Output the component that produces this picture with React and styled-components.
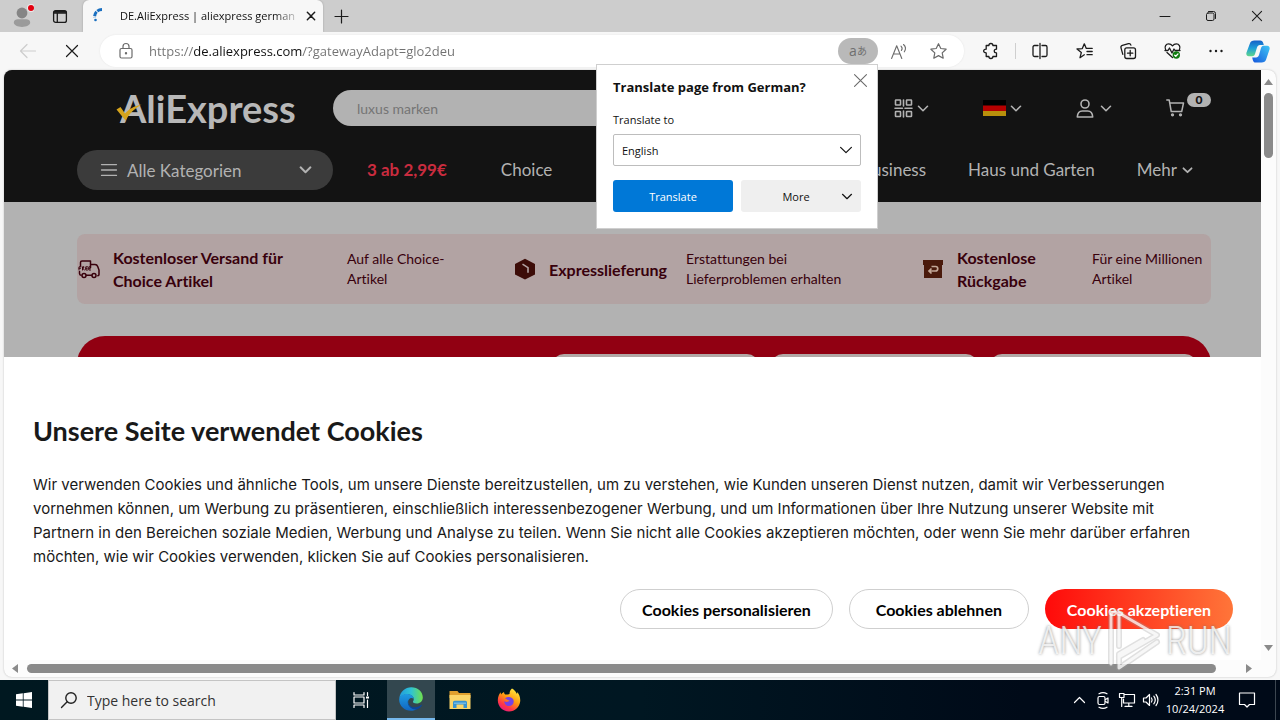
import React, { useState } from "react";
import styled, { createGlobalStyle } from "styled-components";

const GlobalStyle = createGlobalStyle`
    * {
        box-sizing: border-box;
    }
    body {
        margin: 0;
        font-family: "Open Sans", "Noto Sans", sans-serif;
    }
    button, input, select {
        font-family: inherit;
        font-variant-ligatures: none;
        margin: 0;
    }
    button {
        border: 0;
        padding: 0;
        background: none;
        color: inherit;
        cursor: pointer;
    }
    a {
        color: inherit;
        text-decoration: none;
    }
`;

const shopFont = `Lato, "Noto Sans", sans-serif`;

const Desktop = styled.div`
    display: flex;
    flex-direction: column;
    height: 100vh;
    background: #f7f7f7;
    overflow: hidden;
`;

const Glyph = styled.svg`
    display: block;
    flex: none;
    fill: none;
    stroke: currentColor;
    stroke-width: ${(p) => p.$weight || 1};
    stroke-linecap: round;
    stroke-linejoin: round;
    overflow: visible;
`;

/* ---------- tab strip ---------- */

const TabStrip = styled.div`
    display: flex;
    flex: none;
    height: 32px;
    background: #cdcdcd;
    color: #1b1b1b;
`;

const StripButton = styled.button`
    display: flex;
    align-items: center;
    justify-content: center;
    width: ${(p) => p.$width}px;
    height: 32px;
`;

const Tab = styled.div`
    display: flex;
    align-items: center;
    gap: 12px;
    width: 240px;
    margin-left: 7px;
    padding: 0 12px 0 9px;
    background: #f7f7f7;
    border-radius: 6px 6px 0 0;
    box-shadow: 0 0 2px #9a9a9a;
    clip-path: inset(0 -3px 0 -3px);
`;

const TabTitle = styled.span`
    flex: 1;
    font-size: 11px;
    line-height: 16px;
    white-space: nowrap;
    color: #111;
    mask-image: linear-gradient(90deg, #000 88%, transparent 104%);
`;

const WindowButtons = styled.div`
    display: flex;
    margin-left: auto;
`;

/* ---------- toolbar ---------- */

const Toolbar = styled.div`
    display: flex;
    align-items: center;
    flex: none;
    height: 38px;
    padding: 0 3px 0 6px;
    background: #f7f7f7;
    color: #1b1b1b;
`;

const ToolButton = styled.button`
    display: flex;
    align-items: center;
    justify-content: center;
    width: ${(p) => p.$width || 44}px;
    height: 30px;
    color: ${(p) => p.$color || "inherit"};
`;

const Divider = styled.span`
    width: 1px;
    height: 16px;
    margin: 0 2px;
    background: #cfcfcf;
`;

const AddressBar = styled.div`
    display: flex;
    align-items: center;
    flex: 1;
    height: 32px;
    margin: 0 5px 0 6px;
    padding: 0 6px 0 19px;
    border-radius: 16px;
    background: #fff;
    box-shadow: 0 0 2px #e4e4e4;
    color: #6b6b6b;
`;

const UrlInput = styled.input`
    flex: 1;
    min-width: 0;
    height: 24px;
    margin-left: 16px;
    padding: 0;
    border: 0;
    outline: 0;
    font-size: 13px;
    color: transparent;
    background: linear-gradient(90deg, #717171 45px, #111 45px, #111 153px, #717171 153px);
    background-clip: text;
    -webkit-background-clip: text;
`;

const TranslateAnchor = styled.div`
    position: relative;
    margin-right: 2px;
`;

const TranslateToggle = styled.button`
    display: flex;
    align-items: center;
    justify-content: center;
    width: 40px;
    height: 26px;
    border-radius: 13px;
    background: #b9b9b9;
    color: #6f6f6f;
    font-size: 14px;
    line-height: 20px;

    small {
        font-family: "Noto Sans CJK JP", sans-serif;
        font-size: 10px;
    }
`;

const TranslatePopup = styled.form`
    position: absolute;
    z-index: 5;
    top: 100%;
    right: 0;
    display: flex;
    flex-direction: column;
    width: 282px;
    padding: 12px 16px 16px;
    border: 1px solid #cfcfcf;
    background: #fff;
    color: #111;
    font-size: 12px;
`;

const PopupTitle = styled.h2`
    margin: 0 0 15px;
    font-size: 13px;
    line-height: 20px;
    font-weight: 700;
    white-space: nowrap;
`;

const PopupClose = styled.button`
    position: absolute;
    top: 8px;
    right: 9px;
    padding: 1px;
    color: #6a6a6a;
`;

const PopupLabel = styled.label`
    margin-bottom: 6px;
    font-size: 11px;
    line-height: 16px;
`;

const SelectWrap = styled.div`
    display: grid;
    align-items: center;
    margin-bottom: 14px;

    select, svg {
        grid-area: 1 / 1;
    }
    svg {
        justify-self: end;
        margin-right: 9px;
        pointer-events: none;
    }
`;

const LanguageSelect = styled.select`
    appearance: none;
    width: 100%;
    height: 32px;
    padding: 0 8px;
    border: 1px solid #bdbdbd;
    border-radius: 2px;
    background: #fff;
    color: #111;
    font-size: 11px;
`;

const PopupActions = styled.div`
    display: grid;
    grid-template-columns: 1fr 1fr;
    gap: 8px;
`;

const PopupButton = styled.button`
    display: flex;
    align-items: center;
    height: 32px;
    padding: 0 9px;
    border-radius: 3px;
    background: ${(p) => (p.$primary ? "#0078d7" : "#efefef")};
    color: ${(p) => (p.$primary ? "#fff" : "#111")};
    font-size: 11px;

    span {
        flex: 1;
    }
`;

/* ---------- browser view ---------- */

const BrowserView = styled.main`
    position: relative;
    display: grid;
    grid-template-columns: 1fr 15px;
    grid-template-rows: 1fr 17px;
    flex: 1;
    min-height: 0;
    margin: 0 4px 3px;
    border-radius: 8px;
    background: #fcfcfc;
    overflow: hidden;
    box-shadow: 0 0 2px #b9b9b9;
`;

const Page = styled.div`
    display: flex;
    flex-direction: column;
    min-width: 0;
    min-height: 0;
    font-family: ${shopFont};
    font-variant-ligatures: none;
`;

const Shop = styled.div`
    flex: 1;
    min-height: 0;
    overflow: hidden;
    background: #b2b2b2;
`;

const Header = styled.header`
    display: flex;
    flex-direction: column;
    gap: 23px;
    padding: 19px 50px 12px 73px;
    background: #131313;
    color: #b2b2b2;
`;

const HeaderRow = styled.div`
    display: flex;
    align-items: center;
`;

const Logo = styled.a`
    position: relative;
    width: 256px;
    height: 38px;
    padding-left: 43px;
    font-size: 38px;
    font-weight: 700;
    line-height: 38px;
    color: #b8b8b8;

    svg {
        position: absolute;
        left: 39px;
        top: 15px;
    }
`;

const SearchInput = styled.input`
    flex: 1;
    min-width: 0;
    height: 36px;
    padding: 0 24px;
    border: 0;
    border-radius: 18px;
    background: #b2b2b2;
    color: #757575;
    font-size: 14px;

    &::placeholder {
        color: #757575;
    }
`;

const HeaderTools = styled.div`
    display: flex;
    align-items: center;
    gap: 55px;
    margin-left: 47px;
`;

const HeaderTool = styled.button`
    display: flex;
    align-items: center;
    gap: 5px;
    height: 30px;
`;

const CartLink = styled.a`
    display: flex;
    gap: 2px;
    width: 45px;
    height: 30px;
    padding-top: 6px;
`;

const CartCount = styled.span`
    width: 24px;
    height: 14px;
    margin-top: -6px;
    border-radius: 7px;
    background: #b2b2b2;
    color: #131313;
    font-size: 12px;
    font-weight: 900;
    line-height: 14px;
    text-align: center;
`;

const Nav = styled.nav`
    display: flex;
    align-items: center;
    gap: 54px;
    padding-right: 19px;
    font-size: 17px;
    line-height: 24px;
    white-space: nowrap;
`;

const CategoryButton = styled.button`
    display: flex;
    align-items: center;
    gap: 10px;
    width: 256px;
    height: 40px;
    margin-right: -20px;
    padding: 0 22px 0 24px;
    border-radius: 20px;
    background: #3b3b3b;
    font-size: 17px;

    svg:last-child {
        margin-left: auto;
    }
`;

const NavLink = styled.a`
    display: flex;
    align-items: center;
    gap: 6px;
    color: ${(p) => (p.$deal ? "#c92c3f" : "inherit")};
    font-weight: ${(p) => (p.$deal ? 700 : 400)};
`;

const NavEnd = styled.div`
    display: flex;
    gap: 42px;
    margin-left: auto;
`;

const Benefits = styled.section`
    display: grid;
    grid-template-columns: 436fr 408fr 290fr;
    margin: 32px 50px 32px 73px;
    border-radius: 8px;
    background: #b2a3a3;
    color: #38000c;
`;

const Benefit = styled.div`
    display: flex;
    align-items: center;
    height: 70px;
    white-space: nowrap;

    svg {
        margin-right: 12px;
    }
    strong {
        width: ${(p) => p.$titleWidth}px;
        font-size: 16px;
        line-height: 23px;
    }
    span {
        font-size: 14px;
        line-height: 20px;
    }
`;

const Promo = styled.section`
    display: flex;
    justify-content: flex-end;
    gap: 12px;
    margin: 0 50px 0 73px;
    padding: 18px 14px;
    border-radius: 28px 28px 0 0;
    background: #910012;
`;

const PromoCard = styled.div`
    width: 207px;
    height: 120px;
    border-radius: 12px;
    background: #b2a8a6;
`;

/* ---------- cookie banner ---------- */

const CookieBanner = styled.section`
    padding: 56px 28px 31px 29px;
    background: #fff;
    color: #191919;
`;

const CookieTitle = styled.h1`
    margin: 0 0 24px;
    font-size: 27px;
    line-height: 36px;
    font-weight: 700;
`;

const CookieText = styled.p`
    margin: 0 0 20px;
    font-family: Inter, "Noto Sans", sans-serif;
    font-size: 15px;
    line-height: 24px;
    white-space: nowrap;
`;

const CookieActions = styled.div`
    display: flex;
    justify-content: flex-end;
    gap: 16px;
`;

const CookieButton = styled.button`
    height: 40px;
    min-width: 180px;
    padding: 0 21px;
    border: 1px solid ${(p) => (p.$accept ? "transparent" : "#cfcfcf")};
    border-radius: 20px;
    background: ${(p) => (p.$accept ? "linear-gradient(90deg, #ff0a0a, #ff7539) border-box" : "#fff")};
    color: ${(p) => (p.$accept ? "#fff" : "#000")};
    font-size: 16px;
    font-weight: 700;
`;

/* ---------- scroll bars ---------- */

const ScrollColumn = styled.div`
    display: flex;
    flex-direction: column;
    align-items: center;
    justify-content: space-between;
    padding: 9px 0 9px;
    color: #8a8a8a;
`;

const ScrollRow = styled.div`
    display: flex;
    align-items: center;
    gap: 9px;
    padding: 0 9px 0 8px;
    color: #8a8a8a;
`;

const Arrow = styled.svg`
    display: block;
    flex: none;
    fill: currentColor;
`;

const VerticalThumb = styled.div`
    width: 9px;
    height: 65px;
    margin: 8px 0 auto;
    border-radius: 5px;
    background: #8a8a8a;
`;

const HorizontalThumb = styled.div`
    flex: 1;
    height: 9px;
    margin-right: 21px;
    border-radius: 5px;
    background: #8a8a8a;
`;

const Watermark = styled.div`
    position: absolute;
    right: 44px;
    bottom: 3px;
    display: flex;
    align-items: center;
    gap: 4px;
    color: rgba(255, 255, 255, 0.75);
    font-family: "Roboto Condensed", Roboto, sans-serif;
    font-size: 38px;
    font-weight: 300;
    line-height: 66px;
    text-shadow: 0 0 3px rgba(110, 110, 110, 0.8);
    pointer-events: none;
`;

/* ---------- taskbar ---------- */

const Taskbar = styled.footer`
    display: flex;
    flex: none;
    height: 40px;
    background: linear-gradient(90deg, #001820, #001722 50%, #000a18 80%);
    color: #fff;
`;

const TaskButton = styled.button`
    display: flex;
    align-items: center;
    justify-content: center;
    width: ${(p) => p.$width || 48}px;
    height: 40px;
    margin-left: ${(p) => (p.$app ? "1px" : "0")};
    background: ${(p) => (p.$active ? "#33474f" : "transparent")};
    border-bottom: ${(p) => (p.$active ? "2px solid #76b9ed" : "0")};
`;

const TaskSearch = styled.label`
    display: flex;
    align-items: center;
    gap: 10px;
    width: 288px;
    padding: 0 12px;
    border: 1px solid #c4c4c4;
    background: #f1f1f1;
    color: #222;

    input {
        flex: 1;
        min-width: 0;
        padding: 0;
        border: 0;
        outline: 0;
        background: transparent;
        font-size: 14px;
    }
    input::placeholder {
        color: #333;
    }
`;

const Tray = styled.div`
    display: flex;
    margin-left: auto;
    padding-right: 8px;
    border-right: 1px solid #3c4650;
    margin-right: 4px;
`;

const Clock = styled.time`
    width: 64px;
    padding-top: 2px;
    font-size: 11px;
    line-height: 18px;
    text-align: center;
    white-space: nowrap;
`;

const Chevron = ({ size = 10, weight = 2 }) => (
    <Glyph width={size} height={size / 2} viewBox="0 0 10 5" $weight={weight}>
        <path d="M0.5 0.3 5 4.7 9.5 0.3" />
    </Glyph>
);

const Cross = ({ size, weight }) => (
    <Glyph width={size} height={size} viewBox="0 0 12 12" $weight={weight}>
        <path d="M.5.5l11 11M11.5.5l-11 11" />
    </Glyph>
);

function TabBar() {
    return (
        <TabStrip>
            <StripButton $width={44} aria-label="Profile">
                <svg width="24" height="24" viewBox="0 0 24 24">
                    <circle cx="12" cy="9" r="5.4" fill="#858585" />
                    <path d="M3.8 18.6c0-2.4 2-3.4 4-3.4h8.400c2 0 4 1 4 3.400 0 2.600-4 4.400-8.200 4.400s-8.200-1.800-8.200-4.400z" fill="#9b9b9b" />
                    <circle cx="21" cy="4" r="4" fill="#ececec" />
                    <circle cx="21" cy="4" r="3" fill="#e3000f" />
                </svg>
            </StripButton>
            <StripButton $width={32} aria-label="Tab actions">
                <Glyph width="14" height="13" viewBox="0 0 14 13" $weight={1.3}>
                    <rect x=".6" y=".6" width="12.800" height="11.800" rx="2" />
                    <path d="M.6 3h12.800M4.300 3v9.400" />
                    <path d="M1.600 1.800h11" strokeWidth="2" />
                </Glyph>
            </StripButton>
            <Tab>
                <Glyph width="16" height="16" viewBox="0 0 16 16" $weight={3}>
                    <path d="M10 1.500C5.500 1.600 2.600 4.600 2.500 9.500" stroke="#1a6fc0" strokeDasharray="5 1" strokeLinecap="butt" />
                    <circle cx="3.500" cy="12" r="1.300" fill="#1a6fc0" stroke="none" />
                </Glyph>
                <TabTitle>DE.AliExpress | aliexpress german</TabTitle>
                <button aria-label="Close tab">
                    <Cross size={8} weight={2.200} />
                </button>
            </Tab>
            <StripButton $width={36} aria-label="New tab">
                <Glyph width="13" height="13" viewBox="0 0 13 13" $weight={1.200}>
                    <path d="M6.500 0v13M0 6.500h13" />
                </Glyph>
            </StripButton>
            <WindowButtons>
                <StripButton $width={46} aria-label="Minimize">
                    <Glyph width="10" height="10" viewBox="0 0 10 10">
                        <path d="M0 5.500h10" />
                    </Glyph>
                </StripButton>
                <StripButton $width={46} aria-label="Restore">
                    <Glyph width="10" height="10" viewBox="0 0 10 10">
                        <rect x=".5" y="2" width="7.500" height="7.500" rx="1.500" />
                        <path d="M2.500.5h5a2 2 0 0 1 2 2v5" />
                    </Glyph>
                </StripButton>
                <StripButton $width={46} aria-label="Close">
                    <Cross size={10} weight={1.300} />
                </StripButton>
            </WindowButtons>
        </TabStrip>
    );
}

function TranslateDialog({ onClose }) {
    return (
        <TranslatePopup onSubmit={(e) => e.preventDefault()}>
            <PopupTitle>Translate page from German?</PopupTitle>
            <PopupClose type="button" aria-label="Close" onClick={onClose}>
                <Cross size={13} weight={1} />
            </PopupClose>
            <PopupLabel htmlFor="language">Translate to</PopupLabel>
            <SelectWrap>
                <LanguageSelect id="language">
                    <option>English</option>
                </LanguageSelect>
                <Chevron size={12} weight={1} />
            </SelectWrap>
            <PopupActions>
                <PopupButton $primary>
                    <span>Translate</span>
                </PopupButton>
                <PopupButton type="button">
                    <span>More</span>
                    <Chevron size={10} weight={1.200} />
                </PopupButton>
            </PopupActions>
        </TranslatePopup>
    );
}

function NavigationBar() {
    const [open, setOpen] = useState(true);
    const [url, setUrl] = useState("https://de.aliexpress.com/?gatewayAdapt=glo2deu");

    return (
        <Toolbar>
            <ToolButton aria-label="Back" $color="#cdcdcd">
                <Glyph width="16" height="14" viewBox="0 0 16 14" $weight={1.200}>
                    <path d="M7 .5.500 7 7 13.500M.5 7h15" />
                </Glyph>
            </ToolButton>
            <ToolButton aria-label="Stop">
                <Cross size={12} weight={1.200} />
            </ToolButton>
            <AddressBar>
                <Glyph width="14" height="16" viewBox="0 0 14 16" $weight={1.200}>
                    <rect x="1" y="5.500" width="12" height="9.500" rx="1.500" />
                    <path d="M4 5.500V3.500a3 3 0 0 1 6 0v2" />
                    <circle cx="7" cy="10.300" r=".6" fill="currentColor" />
                </Glyph>
                <UrlInput aria-label="Address" value={url} onChange={(e) => setUrl(e.target.value)} spellCheck={false} />
                <TranslateAnchor>
                    <TranslateToggle aria-label="Translate" onClick={() => setOpen(!open)}>
                        a<small>あ</small>
                    </TranslateToggle>
                    {open && <TranslateDialog onClose={() => setOpen(false)} />}
                </TranslateAnchor>
                <ToolButton $width={38} aria-label="Read aloud">
                    <Glyph width="16" height="15" viewBox="0 0 16 15" $weight={1.100}>
                        <path d="M.6 14.500 5.700 1.800 10.800 14.500M2.500 10h6.500" />
                        <path d="M10 2.200c1.300 1.200 1.300 3 .4 4.300M12.500.5c2.300 2 2.300 5 .8 7.300" />
                    </Glyph>
                </ToolButton>
                <ToolButton $width={40} aria-label="Add to favorites">
                    <Glyph width="17" height="16" viewBox="0 0 17 16" $weight={1.200}>
                        <path d="M8.500.7l2.300 4.800 5.300.7-3.900 3.700 1 5.300-4.700-2.600-4.700 2.600 1-5.300L.9 6.200l5.300-.7z" />
                    </Glyph>
                </ToolButton>
            </AddressBar>
            <ToolButton aria-label="Extensions">
                <Glyph width="16" height="16" viewBox="0 0 16 16" $weight={1.300}>
                    <path d="M3.200 2.500h2.700a2 2 0 0 1 4 0h3.600v3.700c-3 0-3 3.700 0 3.700v3.600H9.900a2 2 0 0 1-4 0H3.200V9.900c-3.400 0-3.400-3.700 0-3.700z" />
                </Glyph>
            </ToolButton>
            <Divider />
            <ToolButton aria-label="Split screen">
                <Glyph width="16" height="16" viewBox="0 0 16 16" $weight={1.300}>
                    <path d="M6 2.500H2.500a1.500 1.500 0 0 0-1.500 1.500v8a1.500 1.500 0 0 0 1.500 1.500H6M10 2.500h3.500A1.500 1.500 0 0 1 15 4v8a1.500 1.500 0 0 1-1.500 1.500H10M8 .5v15" />
                </Glyph>
            </ToolButton>
            <ToolButton aria-label="Favorites">
                <Glyph width="17" height="16" viewBox="0 0 17 16" $weight={1.300}>
                    <path d="M8.300 11.800 4 14.700l1.300-5.100L1 6l5.300-.4L8.300.8l2 4.600h5.900M11 8.500h5.200M11 11.700h5.200" />
                </Glyph>
            </ToolButton>
            <ToolButton aria-label="Collections">
                <Glyph width="16" height="16" viewBox="0 0 16 16" $weight={1.300}>
                    <rect x="4.800" y="4.800" width="10.700" height="10.700" rx="2" />
                    <path d="M10.200 7.500v5.300M7.500 10.200h5.300M2.800 11.300 1 4.800A2 2 0 0 1 2.400 2.400L8.500.7a2 2 0 0 1 2.400 1.400" />
                </Glyph>
            </ToolButton>
            <ToolButton aria-label="Browser essentials">
                <Glyph width="17" height="16" viewBox="0 0 17 16" $weight={1.300}>
                    <path d="M1.500 6.500C.2 3.600 2 .8 4.600.8c1.800 0 3 .8 3.900 2 .9-1.200 2.100-2 3.900-2 2.600 0 4.400 2.800 3.100 5.700M1 7.500h3l1.500-2.500 2.500 5 2-4 1 1.500h5M3 9.500l5.500 5" />
                    <circle cx="12.300" cy="12" r="3.700" fill="#107c10" stroke="none" />
                    <path d="M10.700 12.200l1.100 1.100 2.200-2.400" stroke="#fff" />
                </Glyph>
            </ToolButton>
            <ToolButton aria-label="Settings and more">
                <Glyph width="14" height="4" viewBox="0 0 14 4">
                    <g fill="currentColor" stroke="none">
                        <circle cx="1.500" cy="2" r="1.200" />
                        <circle cx="7" cy="2" r="1.200" />
                        <circle cx="12.500" cy="2" r="1.200" />
                    </g>
                </Glyph>
            </ToolButton>
            <ToolButton $width={39} aria-label="Copilot">
                <svg width="24" height="23" viewBox="0 0 24 23">
                    <defs>
                        <linearGradient id="cpA" x1="0" y1="0" x2="0" y2="1">
                            <stop offset="0" stopColor="#1560c8" />
                            <stop offset=".5" stopColor="#1fa0d8" />
                            <stop offset="1" stopColor="#5fd68a" />
                        </linearGradient>
                        <linearGradient id="cpB" x1="1" y1="0" x2="0" y2="1">
                            <stop offset="0" stopColor="#3fc6f5" />
                            <stop offset="1" stopColor="#1556dc" />
                        </linearGradient>
                    </defs>
                    <path d="M8.500.5h5.700c1.800 0 2.500 1 3 2.600l.6 2H14c-1.600 0-2.500.9-3 2.500l-2 6.400c-.5 1.600-1.500 2.200-3 2.200H2.800C.8 16.200-.1 14.500.5 12.500L3.800 3.700C4.500 1.500 6 .5 8.500.5z" fill="url(#cpA)" />
                    <path d="M15.500 22.500H9.800c-1.800 0-2.500-1-3-2.600l-.6-2.500H10c1.600 0 2.500-.9 3-2.500l2-6.900c.5-1.600 1.500-2.200 3-2.200h3.200c2 0 2.900 1.700 2.300 3.700l-3.300 9.800c-.7 2.200-2.200 3.200-4.700 3.200z" fill="url(#cpB)" />
                </svg>
            </ToolButton>
        </Toolbar>
    );
}

function ShopHeader() {
    return (
        <Header>
            <HeaderRow>
                <Logo href="#" aria-label="AliExpress">
                    AliExpress
                    <svg width="26" height="17" viewBox="0 0 26 17">
                        <path d="M.5 5.500 4.500 3 9 9.500C13 5 18 2 25.500.5 18 5 13.500 9.500 9.500 16.500z" fill="#d6a41c" />
                    </svg>
                </Logo>
                <SearchInput aria-label="Suche" placeholder="luxus marken" />
                <HeaderTools>
                    <HeaderTool aria-label="App">
                        <Glyph width="20" height="19" viewBox="0 0 20 19" $weight={1.600}>
                            <rect x="2.500" y="1" width="5" height="5" rx=".5" />
                            <rect x="13.500" y="1" width="5" height="5" rx=".5" />
                            <rect x="2.500" y="12.500" width="5" height="5" rx=".5" />
                            <rect x="13.500" y="12.500" width="5" height="5" rx=".5" />
                            <path d="M10.500 1v6M2 9.300h7.500M12 9.300h7M10.500 12v6" />
                        </Glyph>
                        <Chevron size={10} weight={1.600} />
                    </HeaderTool>
                    <HeaderTool aria-label="Deutschland">
                        <svg width="23" height="16" viewBox="0 0 23 16">
                            <path fill="#000" d="M0 0h23v6H0z" />
                            <path fill="#b50000" d="M0 5.500h23v5.500H0z" />
                            <path fill="#b8900c" d="M0 11h23v5H0z" />
                        </svg>
                        <Chevron size={10} weight={1.600} />
                    </HeaderTool>
                    <HeaderTool aria-label="Konto">
                        <Glyph width="20" height="19" viewBox="0 0 20 19" $weight={1.600}>
                            <circle cx="9" cy="5" r="4" />
                            <path d="M1.300 18c.2-3.800 2.200-6 5-6h5.400c2.800 0 4.800 2.200 5 6z" />
                        </Glyph>
                        <Chevron size={10} weight={1.600} />
                    </HeaderTool>
                    <CartLink href="#" aria-label="Warenkorb">
                        <Glyph width="19" height="18" viewBox="0 0 19 18" $weight={1.500}>
                            <path d="M.8 1h2.400l2 11.500h10.500L17.500 4H3.800" />
                            <circle cx="6.500" cy="15.800" r=".9" />
                            <circle cx="14.500" cy="15.800" r=".9" />
                        </Glyph>
                        <CartCount>0</CartCount>
                    </CartLink>
                </HeaderTools>
            </HeaderRow>
            <Nav>
                <CategoryButton>
                    <Glyph width="16" height="12" viewBox="0 0 16 12" $weight={1.300}>
                        <path d="M.5.600h15M.5 6h15M.5 11.400h15" />
                    </Glyph>
                    Alle Kategorien
                    <Chevron size={11} weight={1.800} />
                </CategoryButton>
                <NavLink href="#" $deal>3 ab 2,99€</NavLink>
                <NavLink href="#">Choice</NavLink>
                <NavEnd>
                    <NavLink href="#">Business</NavLink>
                    <NavLink href="#">Haus und Garten</NavLink>
                    <NavLink href="#">
                        Mehr <Chevron size={9} weight={2} />
                    </NavLink>
                </NavEnd>
            </Nav>
        </Header>
    );
}

function BenefitBar() {
    return (
        <Benefits>
            <Benefit $titleWidth={234}>
                <Glyph width="24" height="24" viewBox="0 0 24 24" $weight={1.500}>
                    <path d="M3.500 9V5.500c0-1 .5-1.500 1.500-1.500h8.500v3.500h4.500c1.500 0 2.200.6 2.700 2l1.300 3.500v4.500c0 .8-.5 1.200-1.200 1.200M2.500 14.500v2c0 1.200.5 1.700 1.500 1.700M9.500 18.200h5M13.500 7.500v3" />
                    <circle cx="7" cy="18.500" r="2" />
                    <circle cx="17" cy="18.500" r="2" />
                    <path d="M2 13V9.800h2M2 11.300h1.500M5.500 13V9.800h1.500l-.7 1.700.9 1.500M10.500 9.800H8.800V13h1.700M8.800 11.300h1.500M13.500 9.800h-1.700V13h1.700M11.800 11.300h1.500" strokeWidth="1" />
                </Glyph>
                <strong>Kostenloser Versand für<br />Choice Artikel</strong>
                <span>Auf alle Choice-<br />Artikel</span>
            </Benefit>
            <Benefit $titleWidth={137}>
                <svg width="24" height="24" viewBox="0 0 24 24">
                    <path d="M12 1.800 22 7v10.500L12 22.500 2 17.500V7z" fill="#3c0c08" />
                    <path d="M9.500 7.200l5.500 3.500v5" fill="none" stroke="#b2a3a3" strokeWidth="1.600" />
                </svg>
                <strong>Expresslieferung</strong>
                <span>Erstattungen bei<br />Lieferproblemen erhalten</span>
            </Benefit>
            <Benefit $titleWidth={135}>
                <svg width="24" height="24" viewBox="0 0 24 24">
                    <path d="M2 3h20v5h-1v13H3V8H2z" fill="#4a1a0c" />
                    <path d="M10.500 9.500h4c3 0 3 4.500 0 4.500H8.500M10.500 11.500 8 14l2.500 2.500" fill="none" stroke="#c4a898" strokeWidth="1.700" />
                </svg>
                <strong>Kostenlose<br />Rückgabe</strong>
                <span>Für eine Millionen<br />Artikel</span>
            </Benefit>
        </Benefits>
    );
}

function Cookies() {
    return (
        <CookieBanner>
            <CookieTitle>Unsere Seite verwendet Cookies</CookieTitle>
            <CookieText>
                Wir verwenden Cookies und ähnliche Tools, um unsere Dienste bereitzustellen, um zu verstehen, wie Kunden unseren Dienst nutzen, damit wir Verbesserungen
                <br />
                vornehmen können, um Werbung zu präsentieren, einschließlich interessenbezogener Werbung, und um Informationen über Ihre Nutzung unserer Website mit
                <br />
                Partnern in den Bereichen soziale Medien, Werbung und Analyse zu teilen. Wenn Sie nicht alle Cookies akzeptieren möchten, oder wenn Sie mehr darüber erfahren
                <br />
                möchten, wie wir Cookies verwenden, klicken Sie auf Cookies personalisieren.
            </CookieText>
            <CookieActions>
                <CookieButton>Cookies personalisieren</CookieButton>
                <CookieButton>Cookies ablehnen</CookieButton>
                <CookieButton $accept>Cookies akzeptieren</CookieButton>
            </CookieActions>
        </CookieBanner>
    );
}

function WindowsTaskbar() {
    return (
        <Taskbar>
            <TaskButton aria-label="Start">
                <svg width="16" height="16" viewBox="0 0 16 16">
                    <path d="M0 2.300 6.800 1.300v6.300H0zM7.600 1.200 16 0v7.600H7.600zM0 8.400h6.800v6.300L0 13.700zM7.600 8.400H16V16l-8.400-1.200z" fill="#fff" />
                </svg>
            </TaskButton>
            <TaskSearch>
                <Glyph width="16" height="16" viewBox="0 0 16 16" $weight={1.400}>
                    <circle cx="10" cy="6" r="5.200" />
                    <path d="M6.200 9.800.500 15.500" />
                </Glyph>
                <input aria-label="Search" placeholder="Type here to search" />
            </TaskSearch>
            <TaskButton $app $width={49} aria-label="Task view">
                <Glyph width="17" height="16" viewBox="0 0 17 16" $weight={1.200}>
                    <path d="M1 .5v2.500h10V.5M1 15.500V13h10v2.500M1 5h10v6H1zM14.500.5v3M14.500 8v7.500" />
                    <path d="M14.500 4.500v2" strokeWidth="3" strokeLinecap="butt" />
                </Glyph>
            </TaskButton>
            <TaskButton $app $active aria-label="Microsoft Edge">
                <svg width="24" height="24" viewBox="0 0 24 24">
                    <defs>
                        <linearGradient id="edgeA" x1="0" y1=".3" x2="1" y2=".3">
                            <stop offset="0" stopColor="#219bdc" />
                            <stop offset=".5" stopColor="#2fc3d4" />
                            <stop offset="1" stopColor="#70e04c" />
                        </linearGradient>
                        <linearGradient id="edgeB" x1="0" y1="0" x2="0" y2="1">
                            <stop offset="0" stopColor="#1e9be2" />
                            <stop offset="1" stopColor="#1165c0" />
                        </linearGradient>
                    </defs>
                    <path d="M.3 11C1.300 4.500 6.200.2 12.300.2 19 .2 23.800 5 23.800 10.500c0 3.700-2.800 6-6 6-3 0-4.500-1.200-3.700-2.300 2-2.800-.6-7-5.300-7C5 7.200 2 8.500.3 11z" fill="url(#edgeA)" />
                    <path d="M.2 12C.5 9 4 6.800 8.500 7c3.800.2 6 2.500 6.300 4.800-3-2.300-6 .2-5.700 3.500.3 4 4.500 7.500 9.400 6.200C16.500 23 14.300 23.800 12 23.800 5.300 23.800-.3 18.500.2 12z" fill="url(#edgeB)" />
                    <path d="M9.200 12.800c-1.200 4.500 2.500 8 7 7.500 2.500-.3 4.500-1.300 5.800-2.300.6-.4 1 .2.700.7-1 1.600-2.400 2.700-4.200 3.500-6.500 1.300-11.300-4-9.300-9.400z" fill="#0b479b" />
                </svg>
            </TaskButton>
            <TaskButton $app aria-label="File Explorer">
                <svg width="22" height="20" viewBox="0 0 22 20">
                    <path d="M.5 1h8l1.500 2h11.500v5H.5z" fill="#e0a02e" />
                    <path d="M.5 5h21v14H.5z" fill="#fbd568" />
                    <path d="M4 18v-5.500c0-1 .6-1.700 1.700-1.700h10.600c1.100 0 1.700.7 1.700 1.700V18h-3.500v-3.500h-7V18z" fill="#3994d0" />
                    <path d="M5 14h12v-1.500H5z" fill="#70b9e5" />
                </svg>
            </TaskButton>
            <TaskButton $app aria-label="Firefox">
                <svg width="24" height="24" viewBox="0 0 24 24">
                    <defs>
                        <linearGradient id="fox" x1=".8" y1="0" x2=".2" y2="1">
                            <stop offset="0" stopColor="#fff044" />
                            <stop offset=".45" stopColor="#ff980e" />
                            <stop offset=".75" stopColor="#ff3647" />
                            <stop offset="1" stopColor="#e31587" />
                        </linearGradient>
                    </defs>
                    <path d="M15 .5c3.800 2.200 4.300 4.700 5 5.500.2-.7.200-1.300 0-2 2.200 2 3.500 5.600 3.200 9.200C22.700 19 18 23.500 12 23.500 5.600 23.500.8 18.500.8 12.300c0-3.200 1.200-6.300 2.900-8 0 1 .2 1.700.5 2.200C5 5.200 6 4.400 7 4c0 1 .4 1.900 1.200 2.600 2 0 3.500 0 4.300-.6C12.500 3.500 13.500 1.500 15 .5z" fill="url(#fox)" />
                    <path d="M8 10.500c1-1.500 3-1.500 4-1.500 3.500.2 5 2.500 4.700 5-.3 2.400-2.400 4-4.700 4-2.800 0-4.800-2.200-4.700-4.700 1.500.8 4 1 5.200-.8-1.800 0-2.500-1.500-4.500-2z" fill="#7542e5" />
                </svg>
            </TaskButton>
            <Tray>
                <TaskButton $width={24} aria-label="Show hidden icons">
                    <Glyph width="11" height="6" viewBox="0 0 11 6" $weight={1.200}>
                        <path d="M.5 5.500l5-5 5 5" />
                    </Glyph>
                </TaskButton>
                <TaskButton $width={24} aria-label="Meet now">
                    <Glyph width="12" height="17" viewBox="0 0 12 17" $weight={1.200}>
                        <rect x="1" y="4.500" width="7" height="8" rx="1.500" />
                        <path d="M8.500 7.500l2.500-1.500v5l-2.500-1.500M2 1.800c2.500-1.500 5.500-1.500 8 0M2 15.200c2.500 1.500 5.500 1.500 8 0" />
                    </Glyph>
                </TaskButton>
                <TaskButton $width={24} aria-label="Network">
                    <Glyph width="16" height="14" viewBox="0 0 16 14" $weight={1.200}>
                        <path d="M6 1.500h9.500v8.500H4.500V6M9.800 10v3M6 13.400h7M.5.500h4.500v4H.5zM2.700 4.500v9" />
                    </Glyph>
                </TaskButton>
                <TaskButton $width={24} aria-label="Volume">
                    <Glyph width="16" height="14" viewBox="0 0 16 14" $weight={1.200}>
                        <path d="M.5 5h2.500l3.500-3.500v11L3 9H.5zM8.500 5c.8 1.200.8 2.800 0 4M10.800 3.200c1.700 2.200 1.700 5.400 0 7.600M13 1.500c2.600 3.200 2.600 7.800 0 11" />
                    </Glyph>
                </TaskButton>
                <Clock>
                    2:31 PM
                    <br />
                    10/24/2024
                </Clock>
                <TaskButton $width={40} aria-label="Notifications">
                    <Glyph width="16" height="16" viewBox="0 0 16 16" $weight={1.200}>
                        <path d="M.5 1h15v11.500h-5L8 15l-2.500-2.500h-5z" />
                    </Glyph>
                </TaskButton>
            </Tray>
        </Taskbar>
    );
}

export default function App() {
    return (
        <Desktop>
            <GlobalStyle />
            <TabBar />
            <NavigationBar />
            <BrowserView>
                <Page>
                    <Shop>
                        <ShopHeader />
                        <BenefitBar />
                        <Promo>
                            <PromoCard />
                            <PromoCard />
                            <PromoCard />
                        </Promo>
                    </Shop>
                    <Cookies />
                </Page>
                <ScrollColumn>
                    <Arrow width="9" height="6" viewBox="0 0 9 6"><path d="M0 6 4.500 0 9 6z" /></Arrow>
                    <VerticalThumb />
                    <Arrow width="9" height="6" viewBox="0 0 9 6"><path d="M0 0h9L4.500 6z" /></Arrow>
                </ScrollColumn>
                <ScrollRow>
                    <Arrow width="6" height="9" viewBox="0 0 6 9"><path d="M6 0v9L0 4.500z" /></Arrow>
                    <HorizontalThumb />
                    <Arrow width="6" height="9" viewBox="0 0 6 9"><path d="M0 0v9l6-4.500z" /></Arrow>
                </ScrollRow>
                <Watermark>
                    <span>ANY</span>
                    <svg width="56" height="66" viewBox="0 0 56 66" fill="none" strokeLinejoin="round" strokeLinecap="round">
                        <path d="M5 56V8c0-4 3-5 6-3M13 38V5l38 22-38 22M13 60l38-26M13 60V46l24-14" stroke="#999" strokeOpacity=".3" strokeWidth="6" />
                        <path d="M5 56V8c0-4 3-5 6-3M13 38V5l38 22-38 22M13 60l38-26M13 60V46l24-14" stroke="#fff" strokeOpacity=".75" strokeWidth="3" />
                    </svg>
                    <span>RUN</span>
                </Watermark>
            </BrowserView>
            <WindowsTaskbar />
        </Desktop>
    );
}
